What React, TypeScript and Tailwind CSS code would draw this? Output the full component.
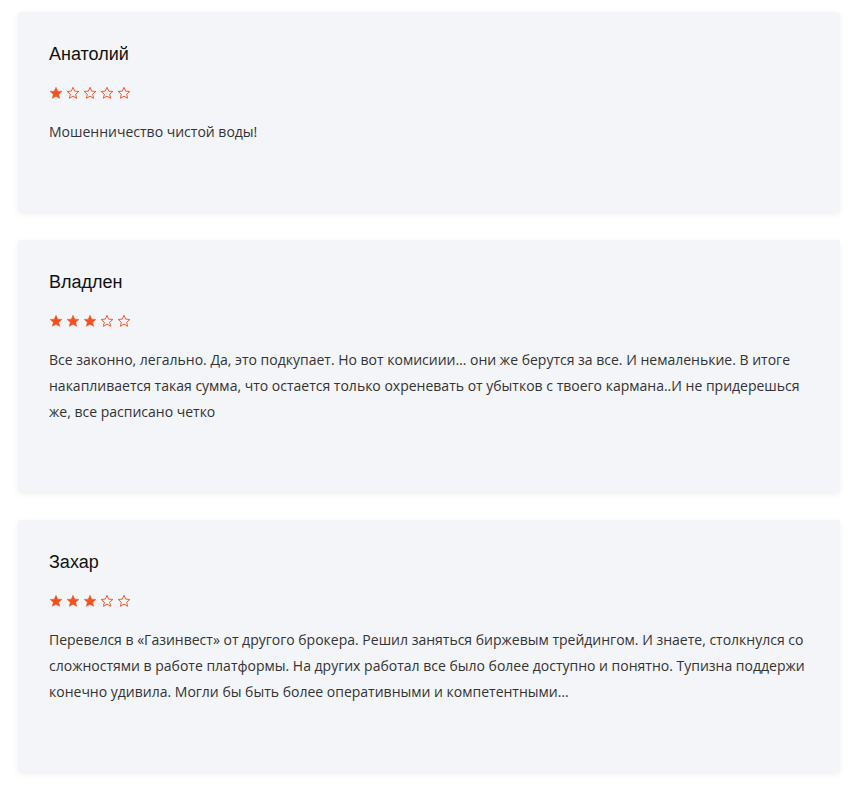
import React from "react";

const reviews = [
  { name: "Анатолий", rating: 1, text: "Мошенничество чистой воды!" },
  {
    name: "Владлен",
    rating: 3,
    text: "Все законно, легально. Да, это подкупает. Но вот комисиии… они же берутся за все. И немаленькие. В итоге накапливается такая сумма, что остается только охреневать от убытков с твоего кармана..И не придерешься же, все расписано четко",
  },
  {
    name: "Захар",
    rating: 3,
    text: "Перевелся в «Газинвест» от другого брокера. Решил заняться биржевым трейдингом. И знаете, столкнулся со сложностями в работе платформы. На других работал все было более доступно и понятно. Тупизна поддержи конечно удивила. Могли бы быть более оперативными и компетентными…",
  },
];

function Star({ filled }: { filled: boolean }) {
  return (
    <svg width="14" height="14" viewBox="0 0 24 24" className="shrink-0">
      <path
        d="M12 2.2l2.9 6.6 7.1.6-5.4 4.7 1.6 7-6.2-3.7-6.2 3.7 1.6-7L2 9.4l7.1-.6z"
        fill={filled ? "#f4511e" : "none"}
        stroke="#f4511e"
        strokeWidth={filled ? 1 : 1.6}
        strokeLinejoin="round"
      />
    </svg>
  );
}

export default function App() {
  return (
    <div className="bg-white min-h-screen pt-3 px-[18px] flex flex-col gap-[28px] font-['Open_Sans',sans-serif]">
      {reviews.map((r) => (
        <div
          key={r.name}
          className="bg-[#f3f5f9] rounded-[3px] shadow-[0_2px_6px_rgba(0,0,0,0.07)] pl-[31px] pr-[30px] pt-[30px] pb-[67px]"
        >
          <div className="text-[18px] leading-6 text-[#111] font-['Liberation_Sans',Arial,sans-serif]">
            {r.name}
          </div>
          <div className="mt-[17px] h-5 flex items-center gap-[3px]">
            {[1, 2, 3, 4, 5].map((i) => (
              <Star key={i} filled={i <= r.rating} />
            ))}
          </div>
          <p className="mt-4 text-[14px] leading-[26px] text-[#333]">{r.text}</p>
        </div>
      ))}
    </div>
  );
}
